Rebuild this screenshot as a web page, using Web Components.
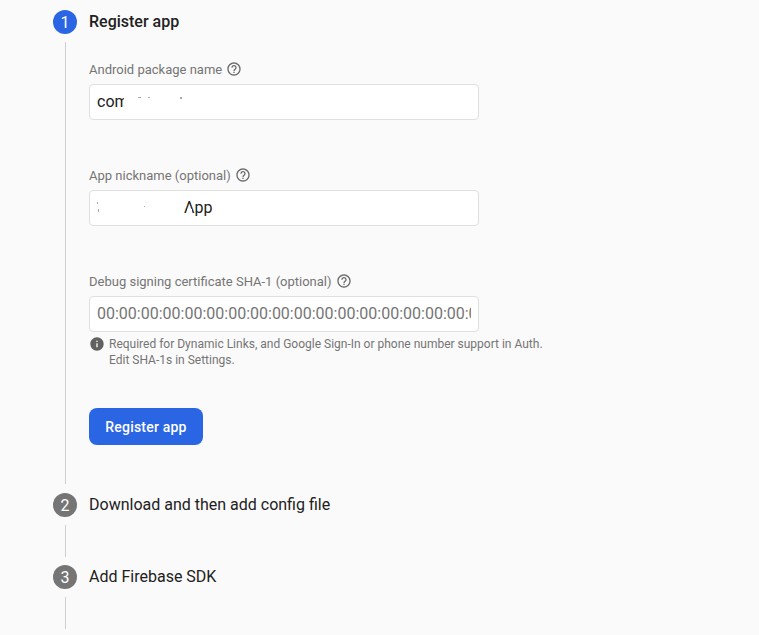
<!DOCTYPE html>
<html lang="en"><head><meta charset="utf-8"><title>Register app</title>
<style>
html,body{margin:0;background:#fafafa;font-family:Roboto,"Liberation Sans",sans-serif}
body{height:635px;overflow:hidden}
fb-stepper{padding:10px 0 0 53px}
</style></head><body>
<fb-stepper>
  <fb-step num="1" title="Register app" active line="442">
    <fb-field label="Android package name" gap="45"><fb-input value="com" patch="a"></fb-input></fb-field>
    <fb-field label="App nickname (optional)" gap="45"><fb-input value="App" patch="b"></fb-input></fb-field>
    <fb-field label="Debug signing certificate SHA-1 (optional)"><fb-input value="00:00:00:00:00:00:00:00:00:00:00:00:00:00:00:00:00:00:00:00" muted></fb-input>
      <fb-hint>Required for Dynamic Links, and Google Sign-In or phone number support in Auth.<br>Edit SHA-1s in Settings.</fb-hint>
    </fb-field>
    <fb-button>Register app</fb-button>
  </fb-step>
  <fb-step num="2" title="Download and then add config file" line="32"></fb-step>
  <fb-step num="3" title="Add Firebase SDK" line="32"></fb-step>
</fb-stepper>
<script>
function shadow(el,html){el.attachShadow({mode:'open'}).innerHTML=html;}
const helpIcon='<svg width="16" height="16" viewBox="0 0 24 24" fill="#6b6b6b" aria-hidden="true"><path d="M11 18h2v-2h-2v2zm1-16C6.48 2 2 6.48 2 12s4.48 10 10 10 10-4.48 10-10S17.52 2 12 2zm0 18c-4.41 0-8-3.59-8-8s3.59-8 8-8 8 3.59 8 8-3.59 8-8 8zm0-14c-2.21 0-4 1.79-4 4h2c0-1.1.9-2 2-2s2 .9 2 2c0 2-3 1.75-3 5h2c0-2.25 3-2.5 3-5 0-2.21-1.79-4-4-4z"/></svg>';
const infoIcon='<svg width="16" height="16" viewBox="0 0 24 24" fill="#616161" aria-hidden="true"><path d="M12 2C6.48 2 2 6.48 2 12s4.48 10 10 10 10-4.48 10-10S17.52 2 12 2zm1 15h-2v-6h2v6zm0-8h-2V7h2v2z"/></svg>';
customElements.define('fb-stepper',class extends HTMLElement{constructor(){super();shadow(this,'<style>:host{display:flex;flex-direction:column;gap:8px;box-sizing:border-box;width:100%}</style><slot></slot>');}});
customElements.define('fb-step',class extends HTMLElement{connectedCallback(){if(this.shadowRoot)return;
 const a=this.hasAttribute('active');
 shadow(this,`<style>
 :host{display:grid;grid-template-columns:24px 1fr;column-gap:12px;row-gap:8px}
 .n{width:24px;height:24px;border-radius:50%;display:flex;align-items:center;justify-content:center;color:#fff;font-size:16px;background:${a?'#2a66e4':'#757575'}}
 .t{font-size:16px;line-height:24px;color:#212121;font-weight:${a?500:400}}
 .r{grid-column:1;width:24px;display:flex;justify-content:center;align-items:flex-start}
 .r i{display:block;width:1px;background:#cfcfcf;height:${this.getAttribute('line')}px}
 .b{grid-column:2;display:flex;flex-direction:column;box-sizing:border-box;${a?'height:443px;padding-top:17px':''}}
 </style><div class="n">${this.getAttribute('num')}</div><div class="t">${this.getAttribute('title')}</div><div class="r"><i></i></div><div class="b"><slot></slot></div>`);
 }});
customElements.define('fb-field',class extends HTMLElement{connectedCallback(){if(this.shadowRoot)return;
 shadow(this,`<style>
 :host{display:block;margin-bottom:${this.getAttribute('gap')||0}px}
 .l{display:flex;align-items:center;gap:4px;height:20px;margin:0 0 5px;font-size:13px;color:#757575}
 svg{display:block}
 </style><div class="l"><span>${this.getAttribute('label')}</span>${helpIcon}</div><slot></slot>`);
 }});
customElements.define('fb-input',class extends HTMLElement{connectedCallback(){if(this.shadowRoot)return;
 const m=this.hasAttribute('muted'),p=this.getAttribute('patch');
 const pa=p==='a'?'<b style="left:34px;top:0;width:160px;height:34px"></b><u style="left:48px;top:12px;width:3px;height:1px"></u><u style="left:58px;top:12px;width:2px;height:1px"></u><u style="left:90px;top:12px;width:2px;height:2px"></u>':'';
 const pb=p==='b'?'<b style="left:97px;top:18px;width:5px;height:3px"></b><u style="left:7px;top:11px;width:1px;height:2px"></u><u style="left:8px;top:18px;width:1px;height:3px"></u><u style="left:54px;top:15px;width:1px;height:1px"></u>':'';
 shadow(this,`<style>
 :host{display:block;width:390px;height:36px;box-sizing:border-box;position:relative;background:#fff;border:1px solid #e0e0e0;border-radius:4px;overflow:hidden}
 .v{display:block;margin:0 7px;line-height:34px;font-size:16px;white-space:nowrap;overflow:hidden;color:${m?'#757575':'#212121'};padding-left:${p==='b'?'87px':'0'}}
 b{position:absolute;background:#fff}
 u{position:absolute;background:#aaa}
 </style><span class="v">${this.getAttribute('value')}</span>${pa}${pb}`);
 }});
customElements.define('fb-hint',class extends HTMLElement{constructor(){super();
 shadow(this,`<style>
 :host{display:flex;gap:4px;margin-top:4px;font-size:12px;line-height:16px;color:#757575}
 svg{display:block;flex:none}
 </style>${infoIcon}<div><slot></slot></div>`);}});
customElements.define('fb-button',class extends HTMLElement{constructor(){super();
 shadow(this,`<style>
 :host{display:inline-flex;align-self:flex-start;align-items:center;justify-content:center;margin-top:40px;width:114px;height:37px;border-radius:8px;background:#2a66e4;color:#fff;font-size:14px;font-weight:500;letter-spacing:.2px}
 </style><slot></slot>`);}});
</script>
</body></html>
